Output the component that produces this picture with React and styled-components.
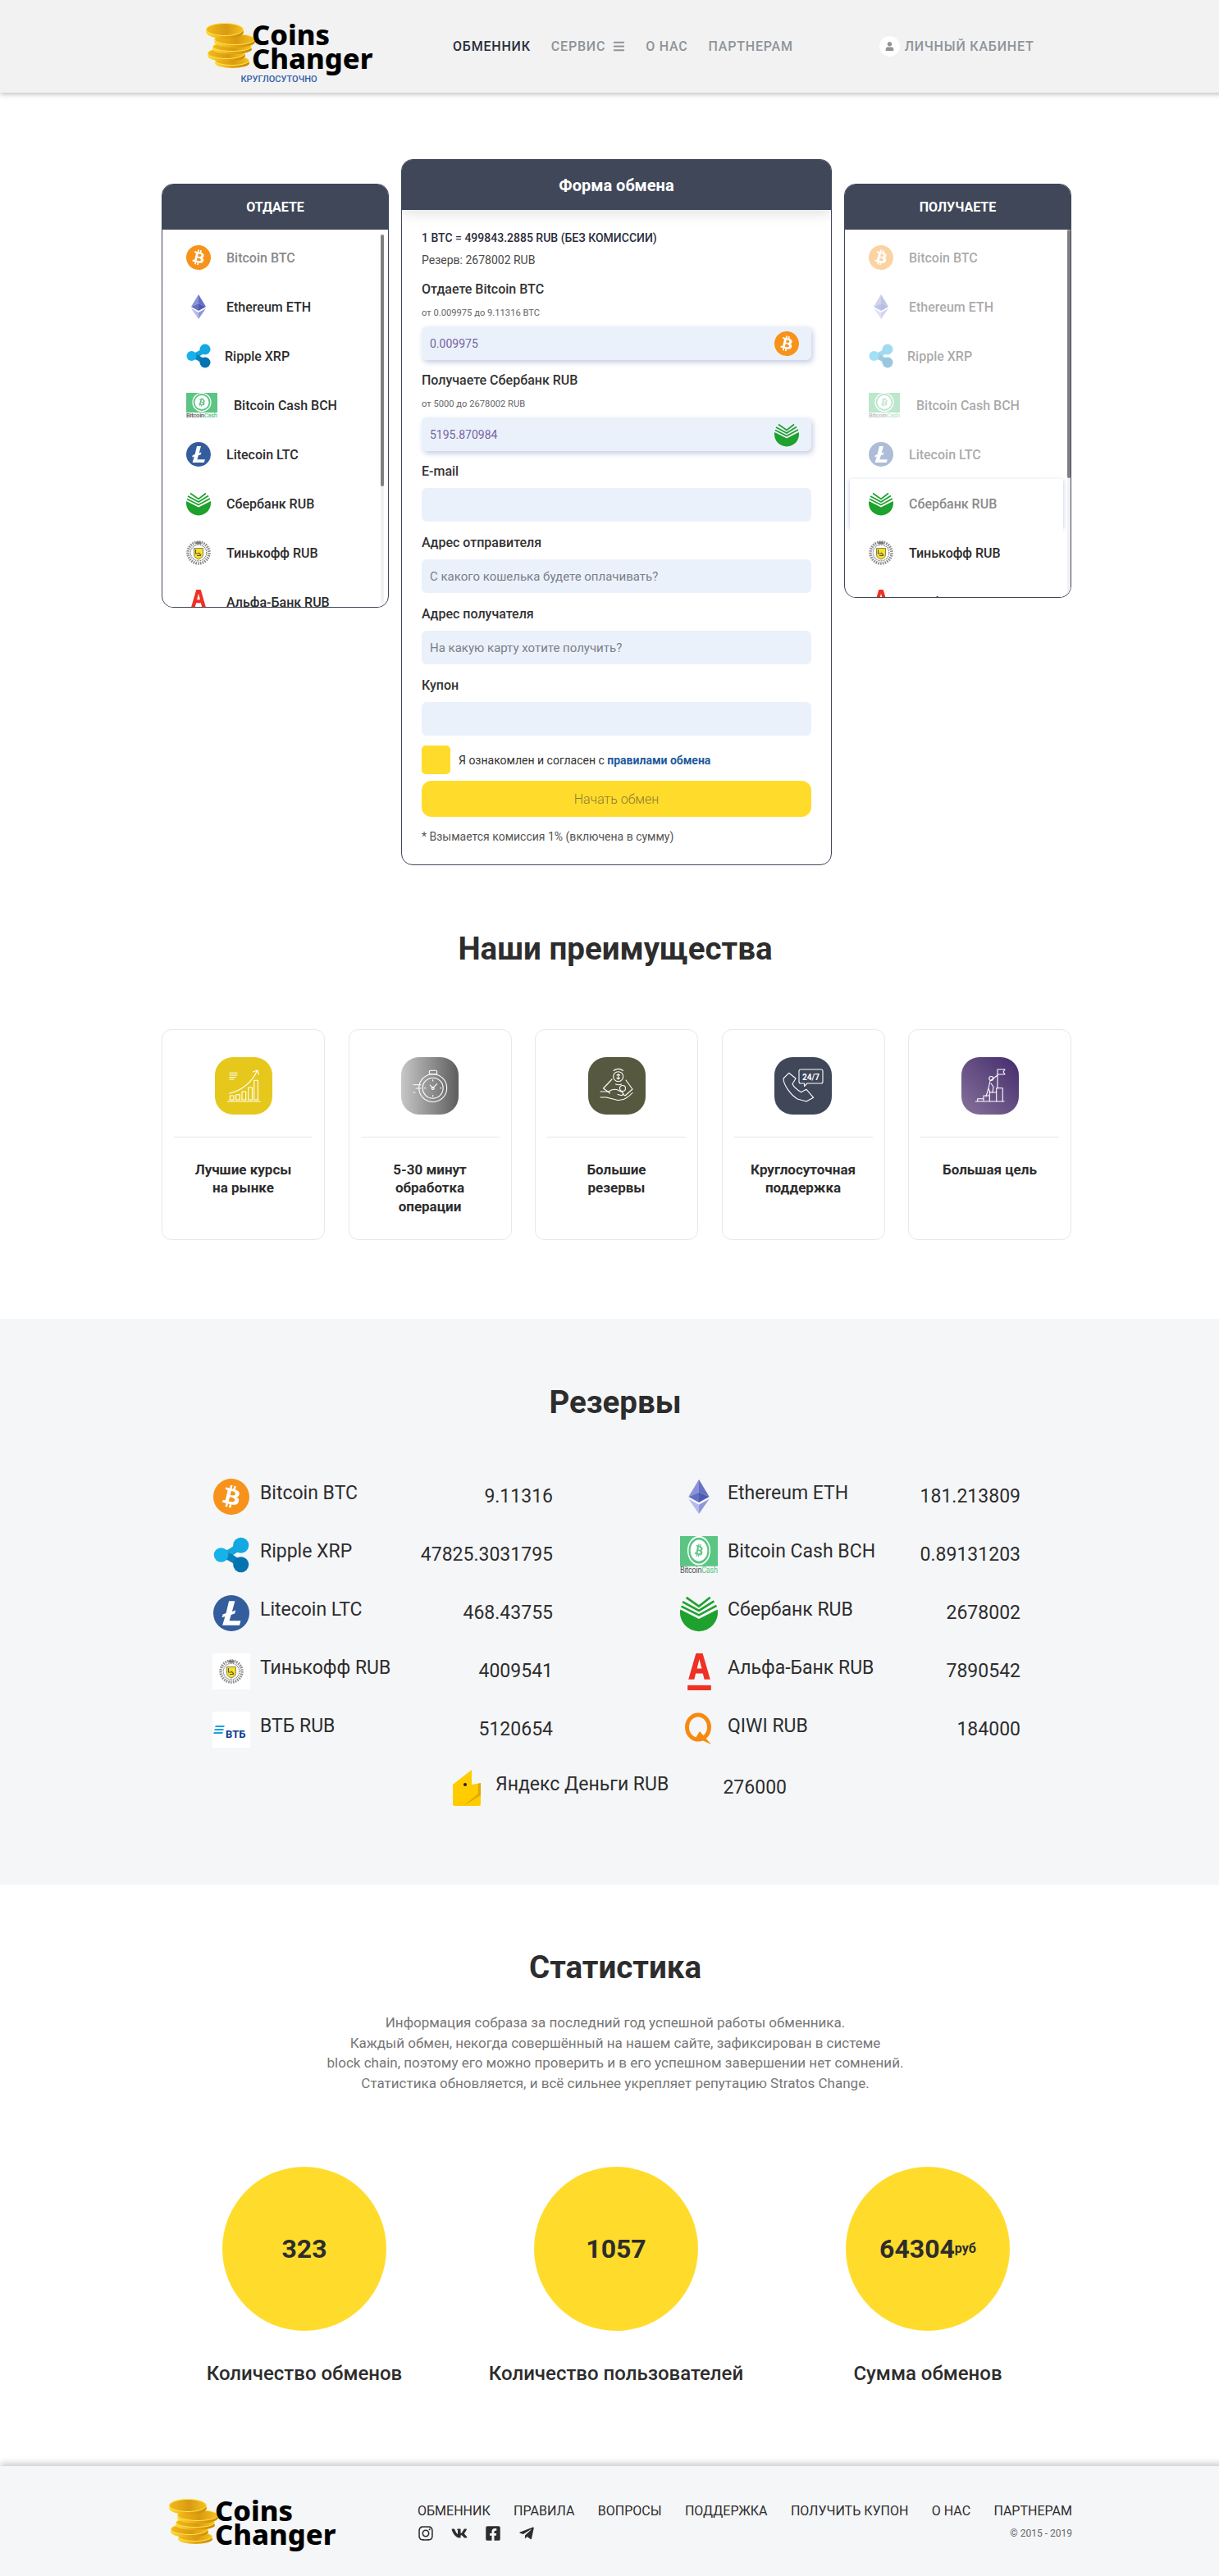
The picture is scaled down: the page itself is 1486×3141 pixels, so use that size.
import React from "react";
import styled, { createGlobalStyle } from "styled-components";
import { FaInstagram, FaVk, FaFacebookSquare, FaTelegramPlane, FaBars, FaUser } from "react-icons/fa";

const GlobalStyle = createGlobalStyle`
  * { box-sizing: border-box; }
  html, body { overflow-x: hidden; }
  body {
    margin: 0;
    background: #fff;
    font-family: Roboto, "Liberation Sans", sans-serif;
    color: #2d2d2d;
  }
  #root { width: 1500px; }
`;

const Header = styled.header`
  height: 113px;
  background: #f2f2f2;
  box-shadow: 0 2px 6px rgba(0, 0, 0, 0.25);
  display: flex;
  align-items: center;
  padding-left: 250px;
`;

const LogoBox = styled.div`
  display: flex;
  flex-direction: column;
  align-items: center;
  width: 206px;
  margin-top: 16px;
`;

const LogoRow = styled.div`
  display: flex;
  align-items: center;
  width: 100%;
`;

const LogoText = styled.div`
  font-family: "Noto Sans", sans-serif;
  font-weight: 800;
  font-size: 34.500px;
  line-height: 29px;
  color: #000;
  margin-left: -5px;
`;

const LogoSub = styled.div`
  font-size: 11px;
  font-weight: 500;
  color: #2f5ea8;
  line-height: 12px;
  margin: 6px 26px 0 0;
`;

const Nav = styled.nav`
  display: flex;
  align-items: center;
  gap: 25px;
  margin-left: 96px;
`;

const NavItem = styled.a`
  display: flex;
  align-items: center;
  gap: 9px;
  font-size: 16px;
  font-weight: 500;
  letter-spacing: 0.8px;
  color: ${(p) => (p.$active ? "#2b2e3b" : "#8f9499")};
`;

const Cabinet = styled(NavItem)`
  margin-left: 105px;
  gap: 6px;
`;

const UserBadge = styled.span`
  width: 25px;
  height: 25px;
  border-radius: 50%;
  background: #fff;
  display: flex;
  align-items: center;
  justify-content: center;
  font-size: 11px;
`;

const Exchange = styled.section`
  display: grid;
  grid-template-columns: 277px 525px 277px;
  gap: 15px;
  align-items: start;
  margin: 81px 0 0 197px;
`;

const SidePanel = styled.div`
  margin-top: 30px;
  height: ${(p) => p.$height}px;
  border: 1px solid #3f4759;
  border-radius: 14px;
  overflow: hidden;
  display: flex;
  flex-direction: column;
`;

const PanelHead = styled.div`
  height: 55px;
  flex: none;
  background: #3f4759;
  color: #fff;
  display: flex;
  align-items: center;
  justify-content: center;
  font-size: 16px;
  font-weight: 700;
`;

const PanelBody = styled.div`
  position: relative;
  flex: 1;
  overflow: hidden;
  padding-top: 4px;
`;

const ScrollTrack = styled.div`
  position: absolute;
  top: ${(p) => p.$top}px;
  right: ${(p) => p.$right}px;
  bottom: 5px;
  width: 4px;
  border-radius: 2px;
  background: #f1f1f1;
`;

const ScrollThumb = styled.div`
  height: ${(p) => p.$height}px;
  border-radius: 2px;
  background: #808080;
`;

const CoinRow = styled.div`
  height: 60px;
  margin: 0 9px 0 6px;
  padding-left: 23px;
  display: flex;
  align-items: center;
  gap: ${(p) => p.$gap}px;
  font-size: 16px;
  font-weight: 500;
  color: ${(p) => (p.$picked ? "#8a8a8a" : "#2d2d2d")};
  background: #fff;
  opacity: ${(p) => (p.$dim ? 0.4 : 1)};
  box-shadow: ${(p) => {
    if (p.$picked === "line") return "0 2px 2px -1px rgba(60, 80, 170, 0.3)";
    if (p.$picked === "box") return "0 1px 5px rgba(60, 80, 170, 0.35)";
    return "none";
  }};
`;

const FormCard = styled.div`
  border: 1px solid #3f4759;
  border-radius: 14px;
  overflow: hidden;
  height: 861px;
`;

const FormHead = styled.div`
  height: 61px;
  background: #3f4759;
  color: #fff;
  box-shadow: 0 6px 14px rgba(0, 0, 0, 0.1);
  display: flex;
  align-items: center;
  justify-content: center;
  font-size: 20px;
  font-weight: 700;
`;

const FormBody = styled.div`
  padding: 26px 24px 0;
`;

const RateLine = styled.div`
  font-size: 14px;
  font-weight: 500;
  line-height: 16px;
  color: #2b2e3b;
`;

const ReserveLine = styled.div`
  font-size: 14px;
  line-height: 16px;
  color: #4a4a4a;
  margin-top: 11px;
`;

const FieldLabel = styled.div`
  font-size: 16px;
  font-weight: 500;
  line-height: 18px;
  color: #333;
  margin-top: ${(p) => p.$top}px;
`;

const Limit = styled.div`
  font-size: 11.200px;
  line-height: 14px;
  color: #666;
  margin: 13px 0 9px;
`;

const InputBox = styled.div`
  height: 41px;
  margin-top: ${(p) => p.$top || 0}px;
  border-radius: 6px;
  background: #ebf1fb;
  box-shadow: ${(p) => (p.$raised ? "2px 3px 6px rgba(70, 90, 160, 0.3)" : "none")};
  display: flex;
  align-items: center;
  justify-content: space-between;
  padding: 0 15px 0 10px;
  font-size: ${(p) => (p.$value ? 14 : 15)}px;
  color: ${(p) => (p.$value ? "#76639f" : "#7a7f88")};
`;

const AgreeRow = styled.div`
  display: flex;
  align-items: center;
  gap: 10px;
  margin-top: 12px;
  font-size: 14px;
  color: #333;
`;

const CheckBox = styled.span`
  width: 35px;
  height: 35px;
  border-radius: 5px;
  background: #ffdc2b;
`;

const RulesLink = styled.a`
  font-weight: 700;
  color: #1f5a9c;
`;

const StartButton = styled.button`
  display: block;
  width: 100%;
  height: 44px;
  margin-top: 8px;
  border: 0;
  border-radius: 12px;
  background: #ffdc2b;
  color: #8d7a35;
  font-family: inherit;
  font-size: 16px;
  font-weight: 300;
`;

const Note = styled.div`
  margin-top: 16px;
  font-size: 14px;
  line-height: 16px;
  color: #555;
`;

const SectionTitle = styled.h2`
  margin: 0;
  text-align: center;
  font-size: 38.500px;
  line-height: 42px;
  font-weight: 700;
  color: #2d2d2d;
`;

const Advantages = styled.section`
  margin-top: 81px;
`;

const AdvGrid = styled.div`
  display: grid;
  grid-template-columns: repeat(5, 199px);
  justify-content: space-between;
  width: 1109px;
  margin: 77px 0 0 197px;
`;

const AdvCard = styled.div`
  height: 257px;
  border: 1px solid #e8e8e8;
  border-radius: 12px;
  padding: 33px 14px 0;
  text-align: center;
`;

const AdvIcon = styled.div`
  width: 70px;
  height: 70px;
  margin: 0 auto;
  border-radius: 22px;
  background: ${(p) => p.$bg};
`;

const AdvDivider = styled.hr`
  border: 0;
  border-top: 1px solid #e6e6e6;
  margin: 27px 0 28px;
`;

const AdvText = styled.div`
  font-size: 17px;
  font-weight: 700;
  line-height: 22.300px;
  color: #2d2d2d;
`;

const Reserves = styled.section`
  margin-top: 96px;
  height: 690px;
  background: #f5f6f8;
  padding-top: 81px;
`;

const ReserveGrid = styled.div`
  display: grid;
  grid-template-columns: 415px 415px;
  justify-content: space-between;
  width: 985px;
  margin: 72px 0 0 259px;
  row-gap: 27px;
`;

const ReserveItem = styled.div`
  display: flex;
  align-items: center;
  height: 44px;
  font-size: 23px;
  line-height: 26px;
  color: #2d2d2d;
`;

const ReserveIcon = styled.span`
  width: 46px;
  height: 44px;
  flex: none;
  display: flex;
  align-items: center;
  justify-content: center;
  margin-right: 12px;
`;

const ReserveName = styled.span`
  flex: 1;
  margin-top: -8px;
`;

const LastItem = styled(ReserveItem)`
  grid-column: 1 / 3;
  justify-self: center;
  width: 413px;
  margin-left: 2px;
`;

const Stats = styled.section`
  padding-top: 80px;
`;

const StatsText = styled.p`
  margin: 34px auto 0;
  width: 800px;
  text-align: center;
  font-size: 17px;
  line-height: 24.700px;
  color: #777;
`;

const CircleRow = styled.div`
  display: grid;
  grid-template-columns: repeat(3, 380px);
  justify-content: center;
  margin: 89px 0 0 2px;
`;

const StatItem = styled.div`
  display: flex;
  flex-direction: column;
  align-items: center;
`;

const Circle = styled.div`
  width: 200px;
  height: 200px;
  border-radius: 50%;
  background: #ffdc2b;
  display: flex;
  align-items: center;
  justify-content: center;
  font-size: 32px;
  font-weight: 700;
  color: #2d2d2d;
`;

const Unit = styled.small`
  font-size: 16px;
  font-weight: 700;
  align-self: center;
`;

const StatLabel = styled.div`
  margin-top: 38px;
  font-size: 24px;
  line-height: 28px;
  font-weight: 500;
  color: #2d2d2d;
`;

const Footer = styled.footer`
  margin-top: 99px;
  height: 136px;
  background: #f5f6f8;
  box-shadow: 0 -3px 8px rgba(0, 0, 0, 0.22);
  display: flex;
  align-items: center;
  padding: 0 193px 0 205px;
  justify-content: space-between;
`;

const FooterLogo = styled(LogoRow)`
  width: 210px;
`;

const FooterRight = styled.div`
  display: flex;
  flex-direction: column;
  gap: 8px;
  width: 798px;
  margin-top: 2px;
`;

const FooterNav = styled.div`
  display: flex;
  justify-content: space-between;
  font-size: 16px;
  line-height: 19px;
  color: #2d2d2d;
`;

const FooterBottom = styled.div`
  display: flex;
  align-items: center;
  justify-content: space-between;
`;

const Socials = styled.div`
  display: flex;
  gap: 21px;
  font-size: 20px;
  color: #2d2d2d;
`;

const Copy = styled.div`
  font-size: 12px;
  color: #666;
`;

const stack = [
  [33, 47, 21, 6],
  [26, 38, 23, 7],
  [33, 30, 24, 6],
  [36, 21, 25, 7],
  [24, 9, 23, 8],
];

const CoinStack = () => (
  <svg width="62" height="58" viewBox="0 0 62 58">
    <defs>
      <linearGradient id="coinFace" x1="0" x2="1" y1="0" y2="0">
        <stop offset="0" stopColor="#f3b81a" />
        <stop offset="0.55" stopColor="#d99a12" />
        <stop offset="1" stopColor="#f5c21d" />
      </linearGradient>
      <linearGradient id="coinEdge" x1="0" x2="1" y1="0" y2="0">
        <stop offset="0" stopColor="#fbdc3a" />
        <stop offset="0.5" stopColor="#e8a50f" />
        <stop offset="1" stopColor="#c98806" />
      </linearGradient>
    </defs>
    {stack.map(([cx, cy, rx, ry]) => (
      <g key={cy}>
        <ellipse cx={cx} cy={cy + 3} rx={rx} ry={ry} fill="url(#coinEdge)" />
        <ellipse cx={cx} cy={cy} rx={rx - 0.5} ry={ry - 0.5} fill="url(#coinFace)" stroke="#ffe44f" strokeWidth="1" />
      </g>
    ))}
  </svg>
);

const BTC_MARK =
  "M46.11 27.441c.636-4.258-2.606-6.547-7.039-8.074l1.438-5.768-3.512-.875-1.4 5.616c-.922-.23-1.87-.447-2.812-.662l1.41-5.653-3.509-.875-1.439 5.766c-.764-.174-1.514-.346-2.242-.527l.004-.018-4.842-1.209-.934 3.75s2.605.597 2.55.634c1.422.355 1.68 1.296 1.636 2.042l-1.638 6.571c.098.025.225.061.365.117l-.37-.092-2.297 9.205c-.174.432-.615 1.08-1.609.834.035.051-2.552-.637-2.552-.637l-1.743 4.02 4.57 1.139c.85.213 1.683.436 2.502.646l-1.453 5.835 3.507.875 1.44-5.772c.957.26 1.887.5 2.797.726L27.504 50.8l3.511.875 1.453-5.823c5.987 1.133 10.49.676 12.383-4.738 1.527-4.36-.075-6.875-3.225-8.516 2.294-.531 4.022-2.04 4.483-5.157zM38.087 38.69c-1.086 4.36-8.426 2.004-10.807 1.412l1.928-7.729c2.38.594 10.011 1.77 8.88 6.317zm1.085-11.312c-.99 3.966-7.1 1.951-9.083 1.457l1.748-7.01c1.983.494 8.367 1.416 7.335 5.553z";

const BtcIcon = ({ size = 30 }) => (
  <svg width={size} height={size} viewBox="0 0 64 64">
    <path fill="#f7931a" d="M63.04 39.741c-4.274 17.143-21.638 27.575-38.783 23.301C7.12 58.768-3.313 41.404.962 24.262 5.234 7.117 22.597-3.317 39.737.957c17.144 4.274 27.576 21.64 23.302 38.784z" />
    <path fill="#fff" d={BTC_MARK} />
  </svg>
);

const EthIcon = ({ size = 30 }) => (
  <svg width={size} height={size} viewBox="0 0 30 30">
    <polygon points="15,0 6,15 15,11" fill="#8a92d8" />
    <polygon points="15,0 24,15 15,11" fill="#6470c4" />
    <polygon points="6,15 15,20 15,11" fill="#6470c4" />
    <polygon points="24,15 15,20 15,11" fill="#4e5ab4" />
    <polygon points="6,17 15,30 15,22" fill="#b4baea" />
    <polygon points="24,17 15,30 15,22" fill="#8e96dc" />
  </svg>
);

const XrpIcon = ({ size = 30 }) => (
  <svg width={size} height={size} viewBox="0 0 30 30">
    <path d="M6 15 C12 15 16 12 23 7" stroke="#14a6dd" strokeWidth="6" fill="none" />
    <path d="M6 15 C12 15 16 18 23 23" stroke="#0a80bb" strokeWidth="6" fill="none" />
    <circle cx="6.500" cy="15" r="6" fill="#17b2ea" />
    <circle cx="23" cy="7" r="6.500" fill="#13a8e0" />
    <circle cx="23" cy="23" r="6.500" fill="#0474b0" />
  </svg>
);

const BchIcon = ({ w = 38, h = 30 }) => (
  <svg width={w} height={h} viewBox="0 0 38 30" preserveAspectRatio="none">
    <rect width="38" height="24" fill="#5cc584" />
    <circle cx="19" cy="11.500" r="11" fill="none" stroke="#fff" strokeWidth="1.200" />
    <circle cx="19" cy="11.500" r="8.500" fill="#fff" />
    <g transform="translate(10.500 3) scale(0.265)">
      <path fill="#5cc584" d={BTC_MARK} />
    </g>
    <text y="29.500" fontSize="7.500" fontFamily="Roboto, sans-serif" fill="#555" textLength="38">
      Bitcoin<tspan fill="#5cc584">Cash</tspan>
    </text>
  </svg>
);

const LtcIcon = ({ size = 30 }) => (
  <svg width={size} height={size} viewBox="0 0 30 30">
    <circle cx="15" cy="15" r="15" fill="#345d9d" />
    <path fill="#fff" d="M13 5h5l-2.400 8.600 3-1-.8 2.700-3 1-1.400 5h9.400l-1 3.700H7.600l2.200-7.300-2.600.9.7-2.600 2.700-1z" />
  </svg>
);

const SberIcon = ({ size = 30 }) => (
  <svg width={size} height={size} viewBox="0 0 30 30">
    <path fill="#1ea12d" d="M0.200 12 L15 19.500 L29.800 12 A15 15 0 1 1 0.200 12z" />
    <path d="M1 9.500 L15 16.500 L29 9 M2 6 L15 13 L27 5.500 M5 2.500 L15 9.500 L24 2.500" stroke="#1ea12d" strokeWidth="1.700" fill="none" />
  </svg>
);

const TinkoffIcon = ({ size = 30, square }) => (
  <svg width={square ? 46 : size} height={square ? 44 : size} viewBox={square ? "-8 -7 46 44" : "0 0 30 30"}>
    {square && <rect x="-8" y="-7" width="46" height="44" fill="#fff" />}
    <circle cx="15" cy="15" r="13" fill="none" stroke="#8a8a8a" strokeWidth="3.500" strokeDasharray="1.600 1.200" />
    <circle cx="15" cy="15" r="9.800" fill="none" stroke="#7a7a7a" strokeWidth="1.200" strokeDasharray="1.200 .8" />
    <path d="M12 1.500h6v3h-6z" fill="#777" />
    <path d="M9.500 9.500h11v8c0 3-3 4.500-5.500 5.500-2.500-1-5.500-2.500-5.500-5.500z" fill="#f5e01e" stroke="#555" strokeWidth="0.700" />
    <path d="M11.500 11v5h3.500M15 15l3 3M13 18.500h5" fill="none" stroke="#555" strokeWidth="1.100" />
  </svg>
);

const AlfaIcon = ({ size = 30 }) => (
  <svg width={size} height={size} viewBox="0 0 30 44">
    <path fill="#ef3124" d="M11 0h8l9 31h-7l-1.800-7H10.700L9 31H2zM12.200 18h5.700L15 7z" />
    <rect x="1" y="38" width="28" height="6" fill="#ef3124" />
  </svg>
);

const VtbIcon = () => (
  <svg width="46" height="44" viewBox="0 0 46 44">
    <rect width="46" height="44" fill="#fff" />
    <path d="M4 17h11l-1 2H3zM3 21h11l-1 2H2zM2 25h11l-1 2H1z" fill="#1aa3e0" />
    <text x="16" y="32" fontSize="13" fontWeight="700" fill="#0a3d91" fontFamily="Roboto, sans-serif">ВТБ</text>
  </svg>
);

const QiwiIcon = () => (
  <svg width="36" height="44" viewBox="0 0 36 44">
    <ellipse cx="17" cy="19" rx="13.500" ry="15" fill="none" stroke="#f7890f" strokeWidth="5" />
    <path d="M19 24 L33 40 L22 35 L14 32z" fill="#f7890f" />
    <circle cx="23" cy="25" r="2" fill="#fff" />
  </svg>
);

const YandexIcon = () => (
  <svg width="34" height="44" viewBox="0 0 34 44">
    <path fill="#ffcc00" d="M0 18 L23 0 V18 L34 16 V42 Q34 44 32 44 H2 Q0 44 0 42z" />
    <path fill="#dfa900" d="M13 44 L34 31 V16 L31 17 V29z" />
    <circle cx="15" cy="18" r="2" fill="#222" />
  </svg>
);

const coinList = [
  { name: "Bitcoin BTC", icon: <BtcIcon />, gap: 19 },
  { name: "Ethereum ETH", icon: <EthIcon />, gap: 19 },
  { name: "Ripple XRP", icon: <XrpIcon />, gap: 17 },
  { name: "Bitcoin Cash BCH", icon: <BchIcon />, gap: 20 },
  { name: "Litecoin LTC", icon: <LtcIcon />, gap: 19 },
  { name: "Сбербанк RUB", icon: <SberIcon />, gap: 19 },
  { name: "Тинькофф RUB", icon: <TinkoffIcon />, gap: 19 },
  { name: "Альфа-Банк RUB", icon: <AlfaIcon />, gap: 19 },
];

const reserveList = [
  { name: "Bitcoin BTC", value: "9.11316", icon: <BtcIcon size={44} /> },
  { name: "Ethereum ETH", value: "181.213809", icon: <EthIcon size={42} /> },
  { name: "Ripple XRP", value: "47825.3031795", icon: <XrpIcon size={44} /> },
  { name: "Bitcoin Cash BCH", value: "0.89131203", icon: <BchIcon w={46} h={46} /> },
  { name: "Litecoin LTC", value: "468.43755", icon: <LtcIcon size={44} /> },
  { name: "Сбербанк RUB", value: "2678002", icon: <SberIcon size={46} /> },
  { name: "Тинькофф RUB", value: "4009541", icon: <TinkoffIcon square /> },
  { name: "Альфа-Банк RUB", value: "7890542", icon: <AlfaIcon size={45} /> },
  { name: "ВТБ RUB", value: "5120654", icon: <VtbIcon /> },
  { name: "QIWI RUB", value: "184000", icon: <QiwiIcon /> },
];

const line = { fill: "none", stroke: "#fff", strokeWidth: 1.1, strokeLinecap: "round", strokeLinejoin: "round" };

const ChartGlyph = () => (
  <svg width="70" height="70" viewBox="0 0 70 70" {...line}>
    <path d="M15.700 54H55" />
    <rect x="18.300" y="47" width="4.700" height="5" />
    <rect x="25.700" y="45.700" width="4.700" height="6.300" />
    <rect x="33" y="42" width="4.700" height="10" />
    <rect x="40.700" y="37" width="4.700" height="15" />
    <rect x="47.700" y="28.300" width="4.700" height="23.700" />
    <path d="M17.700 44.300C34 40 45 31 51.700 16M46.500 18l5.200-2 1.600 5" />
    <path d="M18 19.300h9M18 22h9M18 24.500h7M18 27h5" />
  </svg>
);

const WatchGlyph = () => (
  <svg width="70" height="70" viewBox="0 0 70 70" {...line}>
    <circle cx="38.700" cy="37.700" r="17" />
    <circle cx="38.700" cy="37.700" r="12.500" />
    <rect x="34.300" y="16.300" width="9.400" height="4.700" rx="1.500" />
    <path d="M36.500 21v-.1M41 21v-.1M38.700 37.700l5-5M38.700 37.700l-3.500-3.500M38.700 27.500v1.500M38.700 46.500v1.500M28.500 37.700H30M47.500 37.700h1.500" />
    <path d="M15 33.700h9M18 38h6M15 43h2" />
    <circle cx="38.700" cy="38" r="1.500" />
  </svg>
);

const HandGlyph = () => (
  <svg width="70" height="70" viewBox="0 0 70 70" {...line}>
    <circle cx="36.700" cy="23.700" r="6" />
    <path d="M31 16.500a9 9 0 0 1 11.500 0M33.500 33a9 9 0 0 0 7 0" />
    <path d="M36.700 20.500v6.500M35 22c1-1 3-1 3.500.2M35 25.500c1 1 3 1 3.500-.2" />
    <path d="M29 27L18.500 38l8 6M46 28l8 11-9 8-3-2" />
    <path d="M15 42h10c4-3 8-3.500 12-1.500l5 2.500c2 2 0 4-2 3.500l-4-1" />
    <path d="M15 49h7l14 3.500c6 .5 13-3.500 18-9" />
    <circle cx="42" cy="38" r="3.500" />
  </svg>
);

const PhoneGlyph = () => (
  <svg width="70" height="70" viewBox="0 0 70 70" {...line}>
    <path d="M17.700 19.300L11 26C11 34 20 46 28 51L39 54L47.700 49.300L39 39.300L32.700 42.700C28 40 24 37 22 32.700L26 26z" />
    <path d="M32 15h25a2 2 0 0 1 2 2v13a2 2 0 0 1-2 2H40l-3.500 3.500V32H32a2 2 0 0 1-2-2V17a2 2 0 0 1 2-2z" />
    <text x="34" y="27.500" fontSize="10" fontWeight="700" fill="#fff" stroke="none" fontFamily="Roboto, sans-serif">
      24/7
    </text>
  </svg>
);

const FlagGlyph = () => (
  <svg width="70" height="70" viewBox="0 0 70 70" {...line}>
    <path d="M17.300 54H52M19.700 54v-3.300H27V47h7.300v-4h8.400v-5.300h7.600V54M27 54v-7M34.300 54V43M42.700 54V38" />
    <path d="M44 38V15h9l-2 3 2 3h-9" />
    <circle cx="36.300" cy="26" r="2.500" />
    <path d="M35 29l-2 9-3 10M35 29l9-7M36 32l3 4-1 7M33 38l2 5" />
  </svg>
);

const advantages = [
  { lines: ["Лучшие курсы", "на рынке"], bg: "#e6c81c", glyph: <ChartGlyph /> },
  { lines: ["5-30 минут", "обработка", "операции"], bg: "linear-gradient(90deg, #c7c7c7, #5d5d5d)", glyph: <WatchGlyph /> },
  { lines: ["Большие", "резервы"], bg: "#56583f", glyph: <HandGlyph /> },
  { lines: ["Круглосуточная", "поддержка"], bg: "#3f4759", glyph: <PhoneGlyph /> },
  { lines: ["Большая цель"], bg: "linear-gradient(45deg, #87729a, #432c6c)", glyph: <FlagGlyph /> },
];

const footerLinks = ["ОБМЕННИК", "ПРАВИЛА", "ВОПРОСЫ", "ПОДДЕРЖКА", "ПОЛУЧИТЬ КУПОН", "О НАС", "ПАРТНЕРАМ"];

const stats = [
  { label: "Количество обменов", value: "323" },
  { label: "Количество пользователей", value: "1057" },
  { label: "Сумма обменов", value: "64304", unit: "руб" },
];

const CoinPanel = ({ title, height, picked, mode, thumb, trackTop, trackRight }) => (
  <SidePanel $height={height}>
    <PanelHead>{title}</PanelHead>
    <PanelBody>
      {coinList.map((coin, index) => (
        <CoinRow
          key={coin.name}
          $gap={coin.gap}
          $picked={index === picked ? mode : undefined}
          $dim={mode === "box" && index < picked}
        >
          {coin.icon}
          {coin.name}
        </CoinRow>
      ))}
      <ScrollTrack $top={trackTop} $right={trackRight}>
        <ScrollThumb $height={thumb} />
      </ScrollTrack>
    </PanelBody>
  </SidePanel>
);

const App = () => (
  <>
    <GlobalStyle />
    <Header>
      <LogoBox>
        <LogoRow>
          <CoinStack />
          <LogoText>
            Coins
            <br />
            Changer
          </LogoText>
        </LogoRow>
        <LogoSub>КРУГЛОСУТОЧНО</LogoSub>
      </LogoBox>
      <Nav>
        <NavItem $active>ОБМЕННИК</NavItem>
        <NavItem>
          СЕРВИС <FaBars size={15} />
        </NavItem>
        <NavItem>О НАС</NavItem>
        <NavItem>ПАРТНЕРАМ</NavItem>
      </Nav>
      <Cabinet>
        <UserBadge>
          <FaUser />
        </UserBadge>
        ЛИЧНЫЙ КАБИНЕТ
      </Cabinet>
    </Header>

    <Exchange>
      <CoinPanel title="ОТДАЕТЕ" height={517} picked={0} mode="line" thumb={307} trackTop={6} trackRight={5} />
      <FormCard>
        <FormHead>Форма обмена</FormHead>
        <FormBody>
          <RateLine>1 BTC = 499843.2885 RUB (БЕЗ КОМИССИИ)</RateLine>
          <ReserveLine>Резерв: 2678002 RUB</ReserveLine>
          <FieldLabel $top={19}>Отдаете Bitcoin BTC</FieldLabel>
          <Limit>от 0.009975 до 9.11316 BTC</Limit>
          <InputBox $raised $value>
            0.009975
            <BtcIcon />
          </InputBox>
          <FieldLabel $top={16}>Получаете Сбербанк RUB</FieldLabel>
          <Limit>от 5000 до 2678002 RUB</Limit>
          <InputBox $raised $value>
            5195.870984
            <SberIcon />
          </InputBox>
          <FieldLabel $top={16}>E-mail</FieldLabel>
          <InputBox $top={11} />
          <FieldLabel $top={17}>Адрес отправителя</FieldLabel>
          <InputBox $top={11}>С какого кошелька будете оплачивать?</InputBox>
          <FieldLabel $top={17}>Адрес получателя</FieldLabel>
          <InputBox $top={11}>На какую карту хотите получить?</InputBox>
          <FieldLabel $top={17}>Купон</FieldLabel>
          <InputBox $top={11} />
          <AgreeRow>
            <CheckBox />
            <span>
              Я ознакомлен и согласен с <RulesLink>правилами обмена</RulesLink>
            </span>
          </AgreeRow>
          <StartButton>Начать обмен</StartButton>
          <Note>* Взымается комиссия 1% (включена в сумму)</Note>
        </FormBody>
      </FormCard>
      <CoinPanel title="ПОЛУЧАЕТЕ" height={505} picked={5} mode="box" thumb={303} trackTop={0} trackRight={0} />
    </Exchange>

    <Advantages>
      <SectionTitle>Наши преимущества</SectionTitle>
      <AdvGrid>
        {advantages.map((item) => (
          <AdvCard key={item.lines[0]}>
            <AdvIcon $bg={item.bg}>{item.glyph}</AdvIcon>
            <AdvDivider />
            <AdvText>
              {item.lines.map((text) => (
                <div key={text}>{text}</div>
              ))}
            </AdvText>
          </AdvCard>
        ))}
      </AdvGrid>
    </Advantages>

    <Reserves>
      <SectionTitle>Резервы</SectionTitle>
      <ReserveGrid>
        {reserveList.map((item) => (
          <ReserveItem key={item.name}>
            <ReserveIcon>{item.icon}</ReserveIcon>
            <ReserveName>{item.name}</ReserveName>
            {item.value}
          </ReserveItem>
        ))}
        <LastItem>
          <ReserveIcon>
            <YandexIcon />
          </ReserveIcon>
          <ReserveName>Яндекс Деньги RUB</ReserveName>
          276000
        </LastItem>
      </ReserveGrid>
    </Reserves>

    <Stats>
      <SectionTitle>Статистика</SectionTitle>
      <StatsText>
        Информация собраза за последний год успешной работы обменника.
        <br />
        Каждый обмен, некогда совершённый на нашем сайте, зафиксирован в системе
        <br />
        block chain, поэтому его можно проверить и в его успешном завершении нет сомнений.
        <br />
        Статистика обновляется, и всё сильнее укрепляет репутацию Stratos Change.
      </StatsText>
      <CircleRow>
        {stats.map((stat) => (
          <StatItem key={stat.label}>
            <Circle>
              {stat.value}
              {stat.unit && <Unit>{stat.unit}</Unit>}
            </Circle>
            <StatLabel>{stat.label}</StatLabel>
          </StatItem>
        ))}
      </CircleRow>
    </Stats>

    <Footer>
      <FooterLogo>
        <CoinStack />
        <LogoText>
          Coins
          <br />
          Changer
        </LogoText>
      </FooterLogo>
      <FooterRight>
        <FooterNav>
          {footerLinks.map((link) => (
            <span key={link}>{link}</span>
          ))}
        </FooterNav>
        <FooterBottom>
          <Socials>
            <FaInstagram />
            <FaVk />
            <FaFacebookSquare />
            <FaTelegramPlane />
          </Socials>
          <Copy>© 2015 - 2019</Copy>
        </FooterBottom>
      </FooterRight>
    </Footer>
  </>
);

export default App;
